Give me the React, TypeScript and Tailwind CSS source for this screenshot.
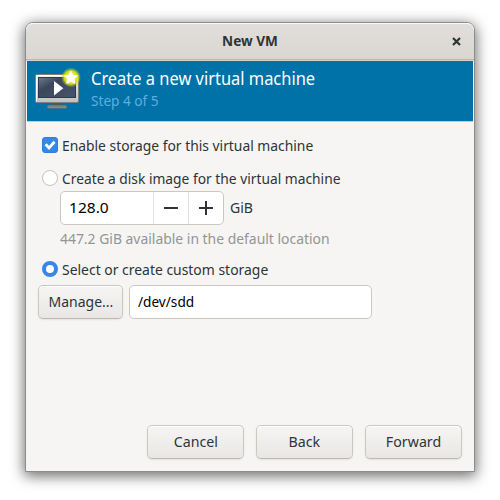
import type { ReactNode } from "react";

function Label({ children, className = "" }: { children: ReactNode; className?: string }) {
  return (
    <span className={`inline-block whitespace-nowrap text-[14.67px] leading-5 ${className}`}>
      {children}
    </span>
  );
}

function Button({ children, className = "" }: { children: ReactNode; className?: string }) {
  return (
    <button
      className={`flex h-[34px] shrink-0 items-center justify-center rounded-[5px] border border-[#cdc7c2] border-b-[#bfb8b1] bg-linear-to-b from-[#f6f5f4] to-[#e8e7e5] pb-0.5 shadow-[inset_0_1px_0_#ffffff,0_1px_2px_rgba(0,0,0,0.08)] ${className}`}
    >
      {children}
    </button>
  );
}

function MonitorIcon() {
  return (
    <svg width="50" height="46" viewBox="0 0 50 46" className="shrink-0">
      <defs>
        <linearGradient id="frame" x1="0" y1="0" x2="0" y2="1">
          <stop offset="0" stopColor="#f2f2f2" />
          <stop offset="1" stopColor="#c0c0be" />
        </linearGradient>
        <linearGradient id="screen" x1="0" y1="0" x2="1" y2="1">
          <stop offset="0" stopColor="#6c7a90" />
          <stop offset="0.35" stopColor="#3b465b" />
          <stop offset="1" stopColor="#46546b" />
        </linearGradient>
        <linearGradient id="base" x1="0" y1="0" x2="0" y2="1">
          <stop offset="0" stopColor="#636361" />
          <stop offset="1" stopColor="#a9a9a7" />
        </linearGradient>
        <radialGradient id="glow">
          <stop offset="0" stopColor="#f8f800" />
          <stop offset="0.65" stopColor="#e2e614" stopOpacity="0.95" />
          <stop offset="1" stopColor="#b4d020" stopOpacity="0" />
        </radialGradient>
      </defs>
      <rect x="17" y="34" width="10" height="4" fill="#555553" />
      <rect x="12.5" y="37.5" width="19" height="2.5" rx="1" fill="url(#base)" stroke="#777775" />
      <rect x="0.5" y="6.5" width="43" height="28" rx="1.5" fill="url(#frame)" stroke="#80807e" />
      <path d="M1.5 33.5V7.5H42.5" fill="none" stroke="#fff" />
      <rect x="3.5" y="9.5" width="37" height="20" fill="url(#screen)" stroke="#303949" />
      <path d="M19 13v14.5l9.3-7.3z" fill="#fff" />
      <circle cx="36" cy="9.5" r="10" fill="url(#glow)" />
      <path
        d="M35.8 3.2l2 4 4.5.6-3.2 3.1.8 4.5-4.1-2.1-4 2.1.7-4.5-3.2-3.1 4.5-.6z"
        fill="#fff"
        stroke="#fff"
        strokeWidth="1"
        strokeLinejoin="round"
      />
    </svg>
  );
}

export default function App() {
  return (
    <div className="flex h-[500px] w-[500px] justify-center overflow-hidden bg-white pt-[22px] font-['Noto_Sans',sans-serif] text-[#2e3436]">
      <main className="flex h-[450px] w-[450px] flex-col rounded-t-[8px] border border-[#8a8d8e] bg-[#f6f5f4] shadow-[0_3px_14px_1px_rgba(0,0,0,0.58)]">
        <header className="flex h-[38px] shrink-0 items-center rounded-t-[7px] border-b border-[#d5d0cc] bg-linear-to-b from-[#e1dedb] to-[#dad6d2] shadow-[inset_0_1px_0_#faf9f8,inset_0_-1px_0_#bfb8b1]">
          <div className="w-9" />
          <h1 className="flex flex-1 justify-center">
            <Label className="scale-x-[0.93] pb-[3px] text-[13.5px] font-bold">New VM</Label>
          </h1>
          <div className="flex w-9 justify-center">
            <svg width="9" height="9" viewBox="0 0 9 9">
              <path d="M1 1l7 7M8 1L1 8" stroke="#2e3436" strokeWidth="2.2" />
            </svg>
          </div>
        </header>
        <section className="mx-px flex h-[61px] shrink-0 border-b border-[#cdc7c2] bg-[#0072a8] pt-[7px] pl-2">
          <MonitorIcon />
          <div className="-mt-px ml-1.5 flex flex-col">
            <Label className="origin-left scale-x-[0.934] text-[17.6px] leading-[22px] text-white">
              Create a new virtual machine
            </Label>
            <Label className="origin-left scale-x-[0.93] pt-px text-[#5caee0]">Step 4 of 5</Label>
          </div>
        </section>
        <section className="flex flex-1 flex-col pt-[15px] pl-4">
          <div className="flex h-4 items-center">
            <svg width="16" height="16" viewBox="0 0 16 16">
              <rect x="0.5" y="0.5" width="15" height="15" rx="2.5" fill="#3987e5" stroke="#2f7de0" />
              <path d="M3.6 7.3l3.4 3.6 5.6-6.1" fill="none" stroke="#fff" strokeWidth="2.8" />
            </svg>
            <Label className="ml-1 origin-left scale-x-[0.945]">Enable storage for this virtual machine</Label>
          </div>
          <div className="mt-[17px] flex h-4 items-center">
            <span className="size-4 rounded-full border border-[#c8c1bb] bg-white" />
            <Label className="ml-1 origin-left scale-x-[0.941]">Create a disk image for the virtual machine</Label>
          </div>
          <div className="mt-[5px] ml-[18px] flex h-[34px] items-center">
            <div className="flex h-[34px] w-[164px] rounded-[5px] border border-[#cdc7c2] bg-white">
              <div className="flex w-[92px] items-center pb-0.5 pl-2">
                <Label className="origin-left scale-x-[1.06] text-black">128.0</Label>
              </div>
              <div className="flex w-[35px] items-center justify-center border-l border-[#e4e2df]">
                <svg width="14" height="14" viewBox="0 0 14 14">
                  <path d="M0 7h14" stroke="#2e3436" strokeWidth="2" />
                </svg>
              </div>
              <div className="flex w-[35px] items-center justify-center border-l border-[#e4e2df]">
                <svg width="14" height="14" viewBox="0 0 14 14">
                  <path d="M0 7h14M7 0v14" stroke="#2e3436" strokeWidth="2" />
                </svg>
              </div>
            </div>
            <Label className="ml-1.5 origin-left scale-x-[0.96] pb-0.5">GiB</Label>
          </div>
          <div className="mt-[3px] ml-[18px] flex h-[21px]">
            <Label className="origin-left scale-x-[0.949] text-[#929595]">
              447.2 GiB available in the default location
            </Label>
          </div>
          <div className="mt-3 flex h-4 items-center">
            <span className="size-4 rounded-full border-[4px] border-[#3886e5] bg-white" />
            <Label className="ml-1 origin-left scale-x-[0.95]">Select or create custom storage</Label>
          </div>
          <div className="mt-2 -ml-1 flex h-[34px] gap-1.5">
            <Button className="w-[85px]">
              <Label className="scale-x-[0.955]">Manage...</Label>
            </Button>
            <div className="flex w-[243px] items-center rounded-[5px] border border-[#cdc7c2] bg-white pb-0.5 pl-2">
              <Label className="origin-left scale-x-[0.93] text-black">/dev/sdd</Label>
            </div>
          </div>
        </section>
        <footer className="flex justify-end gap-3 pr-3 pb-3">
          <Button className="w-[97px]"><Label className="scale-x-[0.97]">Cancel</Label></Button>
          <Button className="w-[97px]"><Label className="scale-x-[0.97]">Back</Label></Button>
          <Button className="w-[97px]"><Label className="scale-x-[0.97]">Forward</Label></Button>
        </footer>
      </main>
    </div>
  );
}
